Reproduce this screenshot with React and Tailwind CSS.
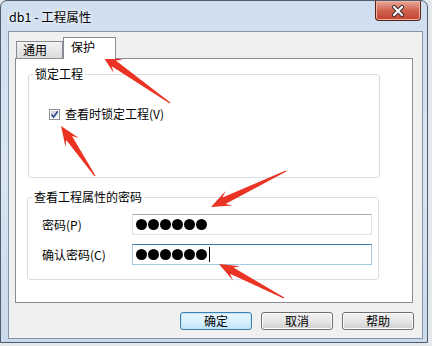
import React from 'react';

const font = "font-['Noto_Sans_CJK_SC','Microsoft_YaHei',sans-serif]";

// 计算红色箭头多边形 (尾 -> 尖)
const arrowPoints = (x1, y1, x2, y2) => {
  const dx = x2 - x1;
  const dy = y2 - y1;
  const len = Math.hypot(dx, dy);
  const ux = dx / len;
  const uy = dy / len;
  const nx = -uy;
  const ny = ux;
  const head = 20;
  const barb = 8;
  const neck = 3.5;
  const bx = x2 - ux * head;
  const by = y2 - uy * head;
  const kx = x2 - ux * head * 0.72;
  const ky = y2 - uy * head * 0.72;
  const pts = [
    [x1 + nx * 0.6, y1 + ny * 0.6],
    [kx + nx * neck, ky + ny * neck],
    [bx + nx * barb, by + ny * barb],
    [x2, y2],
    [bx - nx * barb, by - ny * barb],
    [kx - nx * neck, ky - ny * neck],
    [x1 - nx * 0.6, y1 - ny * 0.6],
  ];
  return pts.map((p) => p.map((v) => v.toFixed(1)).join(',')).join(' ');
};

const arrows = [
  [170, 103, 102, 55],
  [95, 176, 61, 126],
  [286, 171, 211, 207],
  [284, 298, 219, 264],
];

const Dots = ({ cursor }) => (
  <div className="flex items-center gap-[1px] pl-[3px]">
    {[0, 1, 2, 3, 4, 5].map((i) => (
      <span key={i} className="w-[11px] h-[11px] rounded-full bg-black" />
    ))}
    {cursor && <span className="ml-[1px] w-[1px] h-[15px] bg-black" />}
  </div>
);

const Button = ({ children, primary }) => (
  <button
    className={
      primary
        ? 'w-[72px] h-[18px] rounded-[3px] border border-[#3c7fb1] bg-gradient-to-b from-[#eaf6fd] via-[#d9f0fc] to-[#bee6fd] text-[12px] leading-none text-black shadow-[inset_0_0_0_1px_#c4e5f6]'
        : 'w-[72px] h-[18px] rounded-[3px] border border-[#707070] bg-gradient-to-b from-[#f2f2f2] via-[#e6e6e6] to-[#cfcfcf] text-[12px] leading-none text-black shadow-[inset_0_0_0_1px_#fcfcfc]'
    }
  >
    {children}
  </button>
);

const App = () => {
  return (
    <div className={`relative w-[432px] h-[346px] overflow-hidden bg-[#e4e8ec] ${font}`}>
      {/* 窗口 */}
      <div className="w-[428px] h-[343px] rounded-t-[7px] border border-[#4f5d6d] bg-gradient-to-b from-[#cfdeef] via-[#d9e5f2] to-[#c9daec] flex flex-col">
        {/* 标题栏 */}
        <div className="h-[30px] flex items-start justify-between">
          <span className="mt-[7px] ml-[8px] text-[12.5px] leading-[18px] text-black [text-shadow:0_0_6px_#fff,0_0_3px_#fff]">
            db1 - 工程属性
          </span>
          <div className="mr-[6px] w-[46px] h-[20px] rounded-b-[4px] border border-t-0 border-[#5a1f15] bg-gradient-to-b from-[#e9a99b] via-[#d0634f] to-[#c4402d] flex items-center justify-center shadow-[inset_0_0_0_1px_#f0b4a6]">
            <svg width="14" height="12" viewBox="0 0 14 12">
              <path d="M3 2 L11 10 M11 2 L3 10" stroke="#3a2a2a" strokeWidth="4" strokeLinecap="round" />
              <path d="M3 2 L11 10 M11 2 L3 10" stroke="#ffffff" strokeWidth="2.2" strokeLinecap="round" />
            </svg>
          </div>
        </div>

        {/* 客户区 */}
        <div className="ml-[7px] w-[415px] h-[308px] border border-[#8594a6] bg-[#f0f0f0] flex flex-col">
          {/* 选项卡 */}
          <div className="mt-[5px] ml-[7px] flex items-end h-[21px]">
            <div className="w-[47px] h-[17px] border border-b-0 border-[#898c95] bg-gradient-to-b from-[#f3f3f3] to-[#dcdcdc] text-[12px] leading-[16px] pl-[6px] text-black">
              通用
            </div>
            <div className="relative z-10 w-[53px] h-[22px] -mb-[1px] border border-b-0 border-[#898c95] bg-white text-[12px] leading-[18px] pl-[7px] text-black">
              保护
            </div>
          </div>

          {/* 面板 */}
          <div className="ml-[6px] w-[398px] h-[245px] border border-[#898c95] bg-white flex flex-col">
            <fieldset className="mt-[7px] ml-[12px] w-[352px] h-[112px] rounded-[3px] border border-[#d5dfe5]">
              <legend className="ml-[4px] px-[2px] text-[12px] leading-[16px] text-black">锁定工程</legend>
              <div className="mt-[24px] ml-[20px] flex items-center gap-[5px]">
                <svg width="11" height="11" viewBox="0 0 11 11">
                  <defs>
                    <linearGradient id="cb" x1="0" y1="0" x2="1" y2="1">
                      <stop offset="0" stopColor="#cbcfd5" />
                      <stop offset="1" stopColor="#f4f4f4" />
                    </linearGradient>
                  </defs>
                  <rect x="0.5" y="0.5" width="10" height="10" fill="#fff" stroke="#8e8f8f" />
                  <rect x="2" y="2" width="7" height="7" fill="url(#cb)" />
                  <path d="M2.5 5.5 L4.6 8 L8.8 2.2" fill="none" stroke="#2b4a8e" strokeWidth="1.6" />
                </svg>
                <span className="text-[12px] leading-[16px] text-black">查看时锁定工程(V)</span>
              </div>
            </fieldset>

            <fieldset className="mt-[11px] ml-[11px] w-[352px] h-[91px] rounded-[3px] border border-[#d5dfe5]">
              <legend className="ml-[4px] px-[2px] text-[12px] leading-[16px] text-black">查看工程属性的密码</legend>
              <div className="mt-[9px] ml-[14px] flex items-center">
                <span className="w-[90px] text-[12px] leading-[16px] text-black">密码(P)</span>
                <div className="w-[240px] h-[21px] border border-[#e2e3ea] border-t-[#abadb3] bg-white flex items-center">
                  <Dots />
                </div>
              </div>
              <div className="mt-[9px] ml-[14px] flex items-center">
                <span className="w-[90px] text-[12px] leading-[16px] text-black">确认密码(C)</span>
                <div className="w-[240px] h-[21px] border border-[#a4c9e3] border-t-[#3d7bad] bg-white flex items-center">
                  <Dots cursor />
                </div>
              </div>
            </fieldset>
          </div>

          {/* 按钮 */}
          <div className="mt-[9px] mr-[8px] flex justify-end gap-[9px]">
            <Button primary>确定</Button>
            <Button>取消</Button>
            <Button>帮助</Button>
          </div>
        </div>
      </div>

      {/* 红色箭头标注 */}
      <svg className="absolute left-0 top-0 pointer-events-none" width="432" height="346">
        {arrows.map((a, i) => (
          <polygon key={i} points={arrowPoints(...a)} fill="#ea3323" />
        ))}
      </svg>
    </div>
  );
};

export default App;
